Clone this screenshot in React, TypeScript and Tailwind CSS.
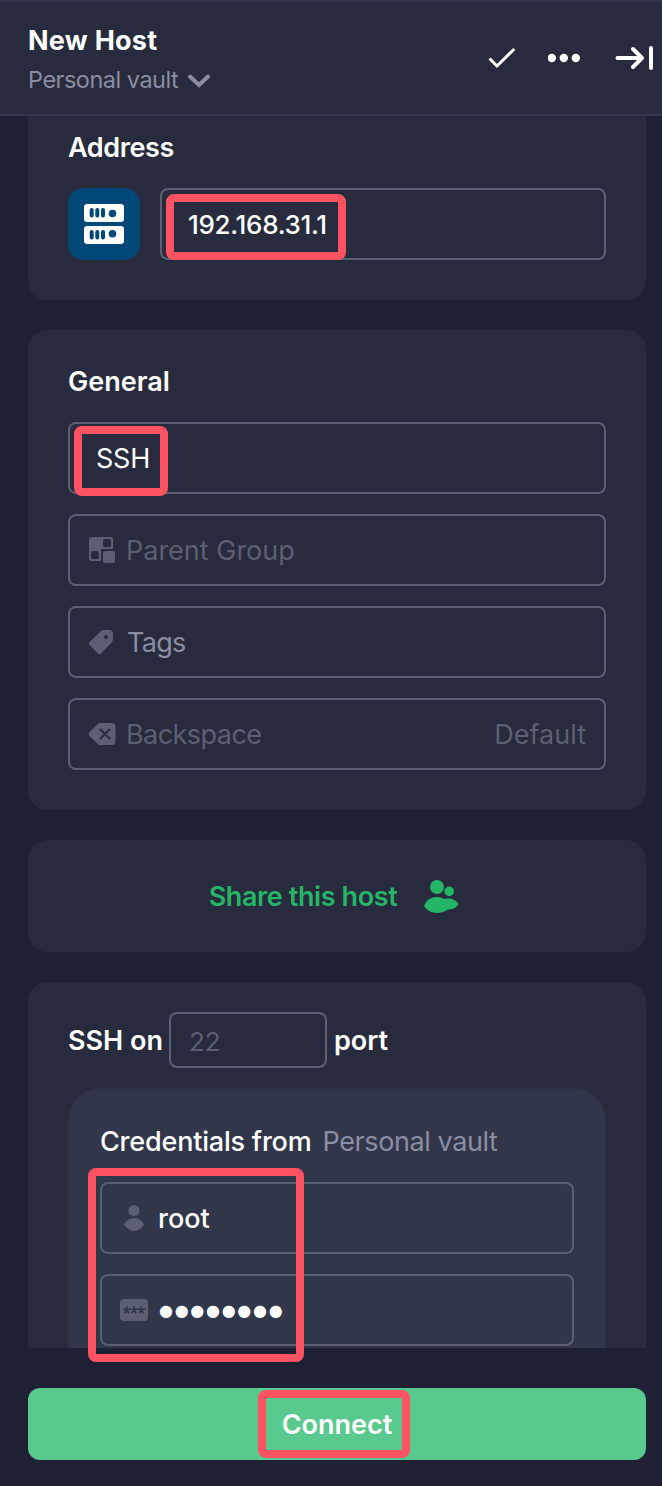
import type { ReactNode } from "react";

const field = "flex h-[72px] shrink-0 items-center rounded-lg border-2 border-[#5c5f73]";
const heading = "text-[27px] leading-[40px] font-semibold whitespace-nowrap text-white";

function Highlight({ className }: { className: string }) {
  return <div className={`pointer-events-none absolute rounded-lg border-8 border-[#ff5262] ${className}`} />;
}

function Card({ className, children }: { className: string; children: ReactNode }) {
  return <section className={`shrink-0 bg-[#282b3d] ${className}`}>{children}</section>;
}

function ServerIcon() {
  return (
    <svg width="40" height="40" viewBox="0 0 40 40">
      <rect width="40" height="18" rx="3" fill="#fff" />
      <rect y="22" width="40" height="18" rx="3" fill="#fff" />
      <g stroke="#004878" strokeWidth="4" strokeLinecap="round">
        <path d="M7.7 6v5.5M13.3 6v5.5M19 6v5.5M7.7 28v5.5M13.3 28v5.5M19 28v5.5" />
      </g>
      <circle cx="28.5" cy="9.5" r="3.8" fill="#004878" />
      <circle cx="28.5" cy="29.7" r="3.8" fill="#004878" />
    </svg>
  );
}

export default function App() {
  return (
    <div className="relative flex h-[1486px] w-[662px] flex-col overflow-hidden bg-[#1e2033] font-[Inter,sans-serif]">
      <header className="flex h-[116px] shrink-0 justify-between border-y-2 border-[#34374b] bg-[#282b3d] pl-7">
        <div className="pt-[19px]">
          <h1 className="text-[27px] leading-[40px] font-bold tracking-[0.25px] whitespace-nowrap text-white">New Host</h1>
          <div className="flex h-[38px] items-center gap-[9px]">
            <span className="w-[150px] text-[23.5px] tracking-[-0.5px] whitespace-nowrap text-[#8a8da3]">Personal vault</span>
            <svg className="mt-px" width="24" height="16" viewBox="0 0 24 16" fill="none" stroke="#8a8da3" strokeWidth="4" strokeLinecap="round">
              <path d="M3 3.500l9 8.500 9-8.500" />
            </svg>
          </div>
        </div>
        <div className="flex h-[112px] items-center gap-8 pr-2 text-white">
          <svg width="28" height="24" viewBox="0 0 28 24" fill="none" stroke="currentColor" strokeWidth="3">
            <path d="M1.500 12.500l7.500 7.500L26.300 3" />
          </svg>
          <svg width="34" height="10" viewBox="0 0 34 10" fill="currentColor">
            <circle cx="3.800" cy="5" r="4.200" />
            <circle cx="15.800" cy="5" r="4.200" />
            <circle cx="27.800" cy="5" r="4.200" />
          </svg>
          <svg width="40" height="26" viewBox="0 0 40 26" fill="none" stroke="currentColor" strokeWidth="4" strokeLinecap="round" strokeLinejoin="round">
            <path d="M3.500 13h24M19 4l9 9-9 9M37 3v20" />
          </svg>
        </div>
      </header>

      <main className="flex h-[1232px] shrink-0 flex-col gap-[30px] overflow-hidden pr-4 pl-7">
        <Card className="h-[184px] rounded-b-[20px] px-10 pt-3">
          <h2 className={`${heading} tracking-[-0.400px]`}>Address</h2>
          <div className="mt-5 flex gap-5">
            <div className="flex h-[72px] w-[72px] items-center justify-center rounded-[16px] bg-[#004878]">
              <ServerIcon />
            </div>
            <div className={`${field} flex-1 pl-[26px]`}>
              <span className="text-[26px] font-medium tracking-[-0.300px] text-white">192.168.31.1</span>
            </div>
          </div>
        </Card>

        <Card className="flex h-[480px] flex-col gap-5 rounded-[20px] px-10 pt-8">
          <h2 className={heading}>General</h2>
          <div className={`${field} pt-[2px] pl-[26px]`}>
            <span className="text-[27px] tracking-[-0.200px] text-white">SSH</span>
          </div>
          <div className={`${field} pl-[18px]`}>
            <svg className="mr-[10px]" width="28" height="28" viewBox="0 0 28 28">
              <rect x="1" y="1" width="24" height="24" rx="2" fill="#5c5f73" />
              <rect x="15" y="3" width="8" height="8" rx="1.5" fill="#282b3d" />
              <rect x="3" y="15" width="8" height="8" rx="1.5" fill="#282b3d" />
              <rect x="13" y="13" width="15" height="15" fill="#282b3d" />
              <rect x="15" y="15" width="12" height="12" rx="2" fill="#5c5f73" />
            </svg>
            <span className="pt-[2px] text-[27px] text-[#5c5f73]">Parent Group</span>
          </div>
          <div className={`${field} pl-[18px]`}>
            <svg className="mr-[13px]" width="26" height="26" viewBox="0 0 26 26">
              <path d="M12.500 2.400Q14 1 16 1h5q4 0 4 4v5q0 2-1.400 3.500L13 24.500q-1.500 1.500-3 0L1.500 16q-1.500-1.500 0-3Z" fill="#5c5f73" />
              <circle cx="18" cy="8" r="2" fill="#282b3d" />
            </svg>
            <span className="pt-[2px] text-[27px] tracking-[-0.700px] text-[#8a8da3]">Tags</span>
          </div>
          <div className={`${field} pr-[18px] pl-[18px]`}>
            <svg className="mr-[10px]" width="28" height="26" viewBox="0 0 28 26">
              <path d="M11 2h12.500q4 0 4 4v14q0 4-4 4H11L2 15.500q-2.500-2.500 0-5Z" fill="#5c5f73" />
              <path d="M12.500 8.500l9 9m0-9l-9 9" stroke="#282b3d" strokeWidth="2" strokeLinecap="round" />
            </svg>
            <span className="flex-1 pt-[2px] text-[27px] tracking-[-0.550px] text-[#5c5f73]">Backspace</span>
            <span className="pt-[2px] text-[27px] text-[#5c5f73]">Default</span>
          </div>
        </Card>

        <Card className="flex h-[112px] items-center justify-center rounded-[20px] pr-[6px]">
          <span className="pt-[2px] text-[27px] font-semibold tracking-[-0.400px] whitespace-nowrap text-[#24b567]">Share this host</span>
          <svg className="mt-[2px] ml-[26px]" width="36" height="36" viewBox="0 0 36 36" fill="#24b567">
            <circle cx="14" cy="8" r="7" />
            <circle cx="26.200" cy="12.400" r="4.800" />
            <path d="M1 27C4 20.500 8 18 14 18q4 0 7.500 2C27 18.500 33 20.500 35.500 25 33 29.500 29 30.500 25 30.500 17 36 6 35 1 27Z" />
          </svg>
        </Card>

        <Card className="h-[500px] rounded-t-[20px] px-10 pt-[30px]">
          <div className="flex h-14 items-center">
            <span className={`${heading} w-[101px] pt-[2px]`}>SSH on</span>
            <div className="flex h-14 w-[158px] items-center rounded-lg border-2 border-[#5c5f73] pt-[2px] pl-[18px]">
              <span className="text-[26px] text-[#5c5f73]">22</span>
            </div>
            <span className={`${heading} ml-[7px] pt-[2px]`}>port</span>
          </div>
          <div className="mt-5 flex h-[400px] flex-col gap-5 rounded-[32px] border-2 border-[#303346] bg-[#32364a] px-[30px] pt-8">
            <div className="flex h-10 shrink-0 items-center gap-[11px] text-[27px] whitespace-nowrap">
              <span className="font-medium tracking-[-0.200px] text-white">Credentials from</span>
              <span className="tracking-[-0.400px] text-[#8a8da3]">Personal vault</span>
            </div>
            <div className={`${field} pl-[18px]`}>
              <svg className="mr-[10px]" width="28" height="28" viewBox="0 0 28 28" fill="#5c5f73">
                <circle cx="14" cy="6.500" r="5.500" />
                <path d="M4 20.500Q7.500 14 14 14t10 6.500Q20 27 14 27T4 20.500Z" />
              </svg>
              <span className="pt-[2px] text-[27px] font-medium text-white">root</span>
            </div>
            <div className={`${field} pl-[18px]`}>
              <svg className="mr-[10px]" width="28" height="24" viewBox="0 0 28 24">
                <rect y="1" width="28" height="22" rx="4" fill="#5c5f73" />
                <g stroke="#32364a" strokeWidth="1.800">
                  <path d="M6.700 12V8.200M6.700 12l-3.600-1.200M6.700 12l3.600-1.200M6.700 12l-2.200 3.200M6.700 12l2.200 3.200" />
                  <path d="M14 12V8.200M14 12l-3.600-1.200M14 12l3.600-1.200M14 12l-2.200 3.200M14 12l2.200 3.200" />
                  <path d="M21.300 12V8.200M21.300 12l-3.600-1.200M21.300 12l3.600-1.200M21.300 12l-2.200 3.200M21.300 12l2.200 3.200" />
                </g>
              </svg>
              <span className="pt-[2px] pl-px font-['DejaVu_Sans',sans-serif] text-[16px] tracking-[1.700px] text-white">●●●●●●●●</span>
            </div>
          </div>
        </Card>
      </main>

      <footer className="pt-10 pr-4 pl-7">
        <button className="flex h-[72px] w-full items-center justify-center rounded-xl bg-[#59c98e] pt-[2px] text-[27px] font-semibold text-white">
          Connect
        </button>
      </footer>

      <Highlight className="top-[194px] left-[166px] h-[66px] w-[180px]" />
      <Highlight className="top-[426px] left-[74px] h-[70px] w-[94px]" />
      <Highlight className="top-[1168px] left-[88px] h-[194px] w-[216px]" />
      <Highlight className="top-[1390px] left-[258px] h-[68px] w-[152px]" />
    </div>
  );
}
